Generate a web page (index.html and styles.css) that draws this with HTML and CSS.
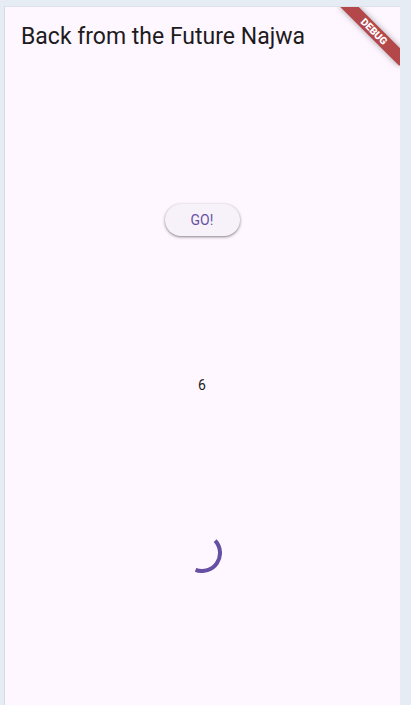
FILE: index.html
```html
<!DOCTYPE html>
<html>
<head>
<meta charset="utf-8">
<link rel="stylesheet" href="styles.css">
</head>
<body>
<div class="frame">
  <header class="appbar">
    <h1 class="title">Back from the Future Najwa</h1>
  </header>
  <main class="content">
    <button class="go">GO!</button>
    <div class="result">6</div>
    <svg class="spinner" width="40" height="40" viewBox="0 0 40 40">
      <path d="M33.16 7.72 A18 18 0 0 1 13.55 36.81" fill="none" stroke="#6750a4" stroke-width="4"/>
    </svg>
  </main>
  <div class="banner-clip">
    <div class="banner">DEBUG</div>
  </div>
</div>
</body>
</html>
```
FILE: styles.css
```css
html, body {
  margin: 0;
  padding: 0;
  width: 411px;
  height: 705px;
  overflow: hidden;
  background: #e6ecf3;
  font-family: Roboto, "Noto Sans", sans-serif;
}

.frame {
  position: relative;
  margin: 6px 0 0 4px;
  width: 396px;
  height: 699px;
  background: #fef7ff;
  border-left: 1px solid #d6dce5;
  border-top: 1px solid #dce2ea;
  box-sizing: border-box;
  overflow: hidden;
}

.appbar {
  height: 56px;
  display: flex;
  align-items: center;
  padding: 4px 0 0 16px;
  box-sizing: border-box;
}

.title {
  margin: 0;
  font-size: 23px;
  font-weight: 400;
  line-height: 28px;
  color: #1d1b20;
}

.content {
  display: flex;
  flex-direction: column;
  align-items: center;
  padding-top: 141px;
  padding-right: 1px;
}

.go {
  width: 75px;
  height: 32px;
  border: none;
  border-radius: 16px;
  background: #f7f2fa;
  color: #6750a4;
  font-family: Roboto, sans-serif;
  font-size: 14px;
  font-weight: 400;
  letter-spacing: 0.1px;
  box-shadow: 0 1px 2px rgba(0,0,0,0.3), 0 1px 3px 1px rgba(0,0,0,0.15);
  padding: 0;
}

.result {
  margin-top: 139px;
  font-size: 14px;
  line-height: 20px;
  color: #1d1b20;
  letter-spacing: 0.25px;
}

.spinner {
  margin-top: 138px;
  display: block;
}

.banner-clip {
  position: absolute;
  top: 0;
  right: 0;
  width: 80px;
  height: 80px;
  overflow: hidden;
}

.banner {
  position: absolute;
  left: 12px;
  top: 18px;
  width: 84px;
  height: 13px;
  transform: rotate(45deg);
  background: #b4474a;
  box-shadow: 0 0 6px rgba(0,0,0,0.35);
  color: #fff;
  font-family: Roboto, "DejaVu Sans", sans-serif;
  font-size: 10.2px;
  font-weight: 900;
  line-height: 13px;
  text-align: center;
}
```
